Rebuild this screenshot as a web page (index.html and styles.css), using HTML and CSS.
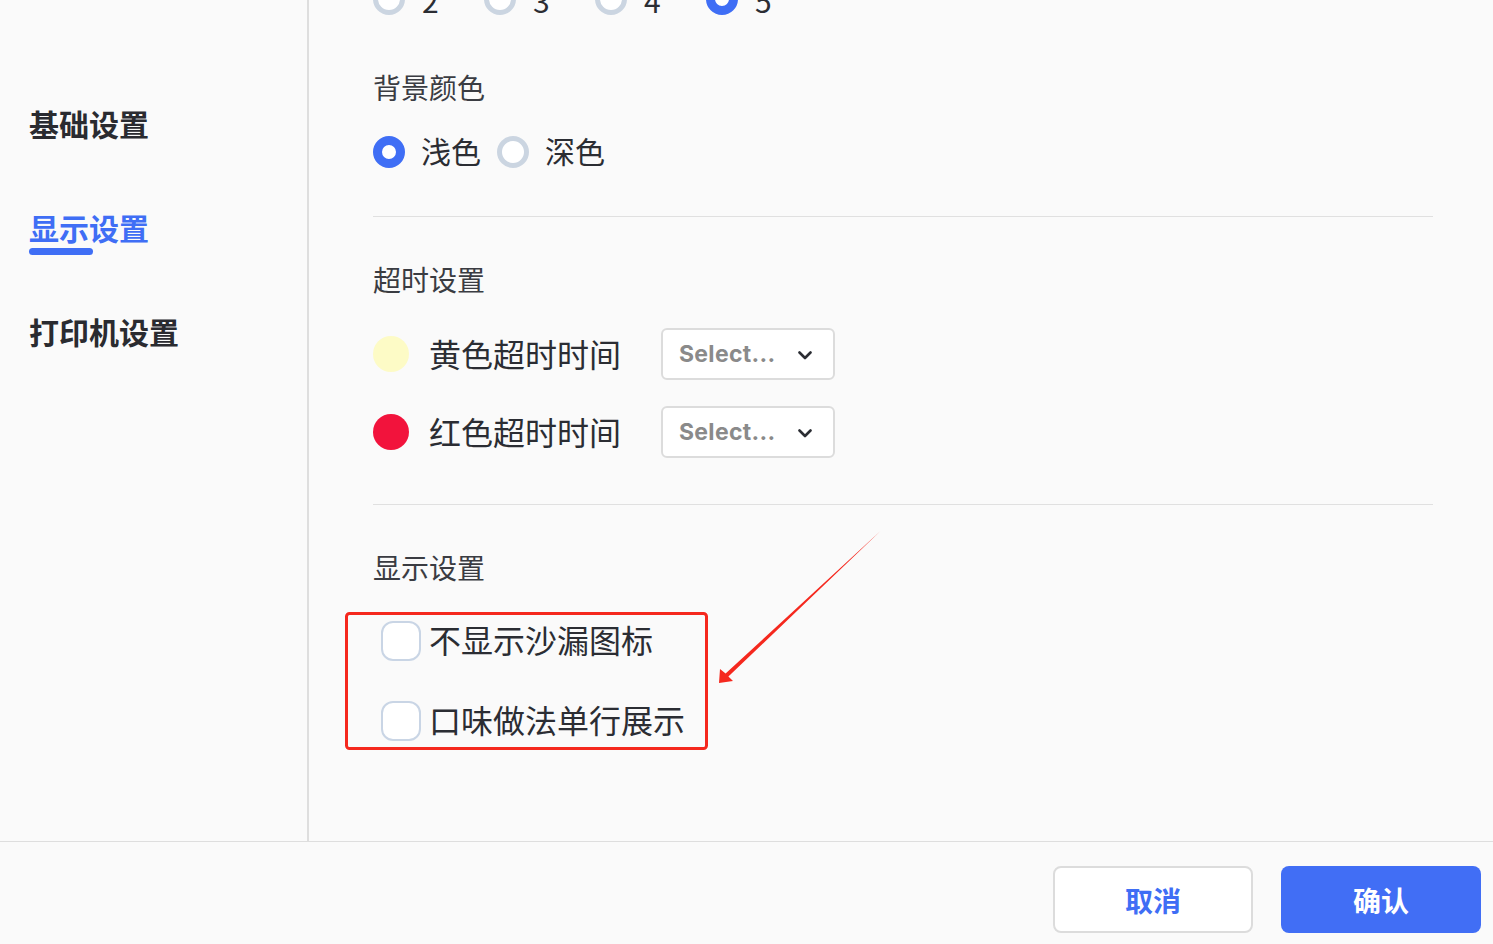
FILE: index.html
```html
<!DOCTYPE html>
<html lang="zh-CN">
<head>
<meta charset="utf-8">
<title>显示设置</title>
<link rel="stylesheet" href="styles.css">
</head>
<body>
<div class="page">
  <div class="main">
    <nav class="sidebar">
      <div class="nav-item">基础设置</div>
      <div class="nav-item active">显示设置</div>
      <div class="nav-item">打印机设置</div>
    </nav>
    <div class="content">
      <div class="scroll">
        <div class="radio-group num">
          <label class="radio-item"><span class="radio"></span><span class="radio-label">2</span></label>
          <label class="radio-item"><span class="radio"></span><span class="radio-label">3</span></label>
          <label class="radio-item"><span class="radio"></span><span class="radio-label">4</span></label>
          <label class="radio-item"><span class="radio checked"></span><span class="radio-label">5</span></label>
        </div>

        <section class="group group-bg">
          <h3 class="group-title">背景颜色</h3>
          <div class="radio-group">
            <label class="radio-item"><span class="radio checked"></span><span class="radio-label">浅色</span></label>
            <label class="radio-item"><span class="radio"></span><span class="radio-label">深色</span></label>
          </div>
        </section>

        <hr class="divider">

        <section class="group group-timeout">
          <h3 class="group-title">超时设置</h3>
          <div class="timeout-list">
            <div class="timeout-row">
              <span class="dot yellow"></span>
              <span class="timeout-label">黄色超时时间</span>
              <div class="select"><span>Select...</span>
                <svg class="chev" width="14" height="9" viewBox="0 0 14 9"><path d="M1.5 1.5 L7 7 L12.5 1.5" fill="none" stroke="#2b2d33" stroke-width="2.6" stroke-linecap="round" stroke-linejoin="round"/></svg>
              </div>
            </div>
            <div class="timeout-row">
              <span class="dot red"></span>
              <span class="timeout-label">红色超时时间</span>
              <div class="select"><span>Select...</span>
                <svg class="chev" width="14" height="9" viewBox="0 0 14 9"><path d="M1.5 1.5 L7 7 L12.5 1.5" fill="none" stroke="#2b2d33" stroke-width="2.6" stroke-linecap="round" stroke-linejoin="round"/></svg>
              </div>
            </div>
          </div>
        </section>

        <hr class="divider">

        <section class="group group-display">
          <h3 class="group-title">显示设置</h3>
          <div class="check-list">
            <label class="check-row"><span class="checkbox"></span><span class="check-label">不显示沙漏图标</span></label>
            <label class="check-row"><span class="checkbox"></span><span class="check-label">口味做法单行展示</span></label>
          </div>
        </section>
      </div>
    </div>
  </div>
  <footer class="footer">
    <button class="btn btn-cancel">取消</button>
    <button class="btn btn-ok">确认</button>
  </footer>

  <svg class="annotation" width="1493" height="944" viewBox="0 0 1493 944">
    <rect x="346.5" y="613.5" width="360" height="135" rx="3" ry="3" fill="none" stroke="#f5281e" stroke-width="3"/>
    <polygon points="880.5,531 725.6,673.6 720,669 719,683 733,681 728.4,676.6" fill="#f5281e"/>
  </svg>
</div>
</body>
</html>
```

FILE: styles.css
```css
* {
  box-sizing: border-box;
}

html, body {
  margin: 0;
  padding: 0;
  background: #fafafa;
}

body {
  font-family: "Noto Sans CJK SC", "Noto Sans", sans-serif;
  color: #2b2d33;
}

.page {
  position: relative;
  width: 1493px;
  height: 944px;
  display: flex;
  flex-direction: column;
  overflow: hidden;
}

.main {
  height: 841px;
  display: flex;
  overflow: hidden;
}

/* Sidebar */
.sidebar {
  width: 309px;
  flex: none;
  border-right: 2px solid #dedede;
  padding: 103px 0 0 29px;
  display: flex;
  flex-direction: column;
}

.nav-item {
  height: 104px;
  font-size: 30px;
  line-height: 40px;
  font-weight: 700;
  color: #2a2b30;
  display: flex;
  flex-direction: column;
  align-items: flex-start;
}

.nav-item.active {
  color: #3f6ef5;
}

.nav-item.active::after {
  content: "";
  display: block;
  width: 64px;
  height: 7px;
  margin-top: 1px;
  border-radius: 4px;
  background: #3f6ef5;
}

/* Content */
.content {
  flex: 1;
  padding: 0 60px 0 64px;
  overflow: hidden;
}

.scroll {
  margin-top: -21px;
  display: flex;
  flex-direction: column;
}

.radio-group {
  display: flex;
  align-items: center;
  gap: 16px;
  height: 40px;
}

.radio-item {
  display: flex;
  align-items: center;
  gap: 16px;
}

.radio-group.num .radio-item {
  width: 95px;
  gap: 17px;
}

.radio {
  width: 32px;
  height: 32px;
  border-radius: 50%;
  border: 5px solid #cbd5e1;
  background: #ffffff;
  flex: none;
}

.radio.checked {
  border: 9px solid #3f6ef5;
}

.radio-label {
  font-size: 30px;
  line-height: 40px;
  margin-bottom: 4px;
  color: #2b2d33;
}

.radio-group.num .radio-label {
  margin-bottom: 0;
  margin-top: 2px;
}

.group-title {
  margin: 0 0 24px;
  font-size: 28px;
  line-height: 38px;
  padding-bottom: 2px;
  font-weight: 400;
  color: #3a3c42;
}

.group-bg {
  margin-top: 49px;
}

.divider {
  margin: 44px 0 43px;
  border: none;
  border-top: 1px solid #e0e0e0;
  height: 0;
}

.group-timeout {
  padding-bottom: 2px;
}

.timeout-list {
  padding-top: 4px;
  display: flex;
  flex-direction: column;
  gap: 26px;
}

.timeout-row {
  display: flex;
  align-items: center;
  height: 52px;
}

.dot {
  width: 36px;
  height: 36px;
  border-radius: 50%;
  flex: none;
}

.dot.yellow {
  background: #fdfbc6;
}

.dot.red {
  background: #f2133c;
}

.timeout-label {
  margin-left: 20px;
  margin-bottom: 2px;
  width: 192px;
  font-size: 32px;
  line-height: 40px;
  white-space: nowrap;
}

.select {
  margin-left: 40px;
  width: 174px;
  height: 52px;
  border: 2px solid #dcdcdc;
  border-radius: 6px;
  background: #ffffff;
  display: flex;
  align-items: center;
  justify-content: space-between;
  padding: 0 21px 0 16px;
  font-family: Inter, "Liberation Sans", sans-serif;
  font-weight: 700;
  font-size: 23px;
  letter-spacing: 0.3px;
  color: #8a8a8a;
}

.chev {
  display: block;
  margin-top: 2px;
}

.check-list {
  padding-top: 9px;
  display: flex;
  flex-direction: column;
  gap: 40px;
}

.check-row {
  display: flex;
  align-items: center;
  gap: 8px;
  padding-left: 8px;
  height: 40px;
}

.checkbox {
  width: 40px;
  height: 40px;
  border: 2px solid #c9d5e5;
  border-radius: 12px;
  background: #ffffff;
  flex: none;
}

.check-label {
  font-size: 32px;
  line-height: 40px;
  margin-bottom: 4px;
  white-space: nowrap;
}

/* Footer */
.footer {
  flex: 1;
  border-top: 1px solid #dedede;
  display: flex;
  justify-content: flex-end;
  align-items: flex-start;
  gap: 28px;
  padding: 24px 12px 0 0;
}

.btn {
  width: 200px;
  height: 67px;
  border-radius: 8px;
  font-family: "Noto Sans CJK SC", sans-serif;
  font-size: 28px;
  font-weight: 700;
  cursor: pointer;
}

.btn-cancel {
  background: #ffffff;
  border: 2px solid #dcdcdc;
  color: #3f6ef5;
}

.btn-ok {
  background: #416ef5;
  border: none;
  color: #ffffff;
}

.annotation {
  position: absolute;
  left: 0;
  top: 0;
  pointer-events: none;
}
```
